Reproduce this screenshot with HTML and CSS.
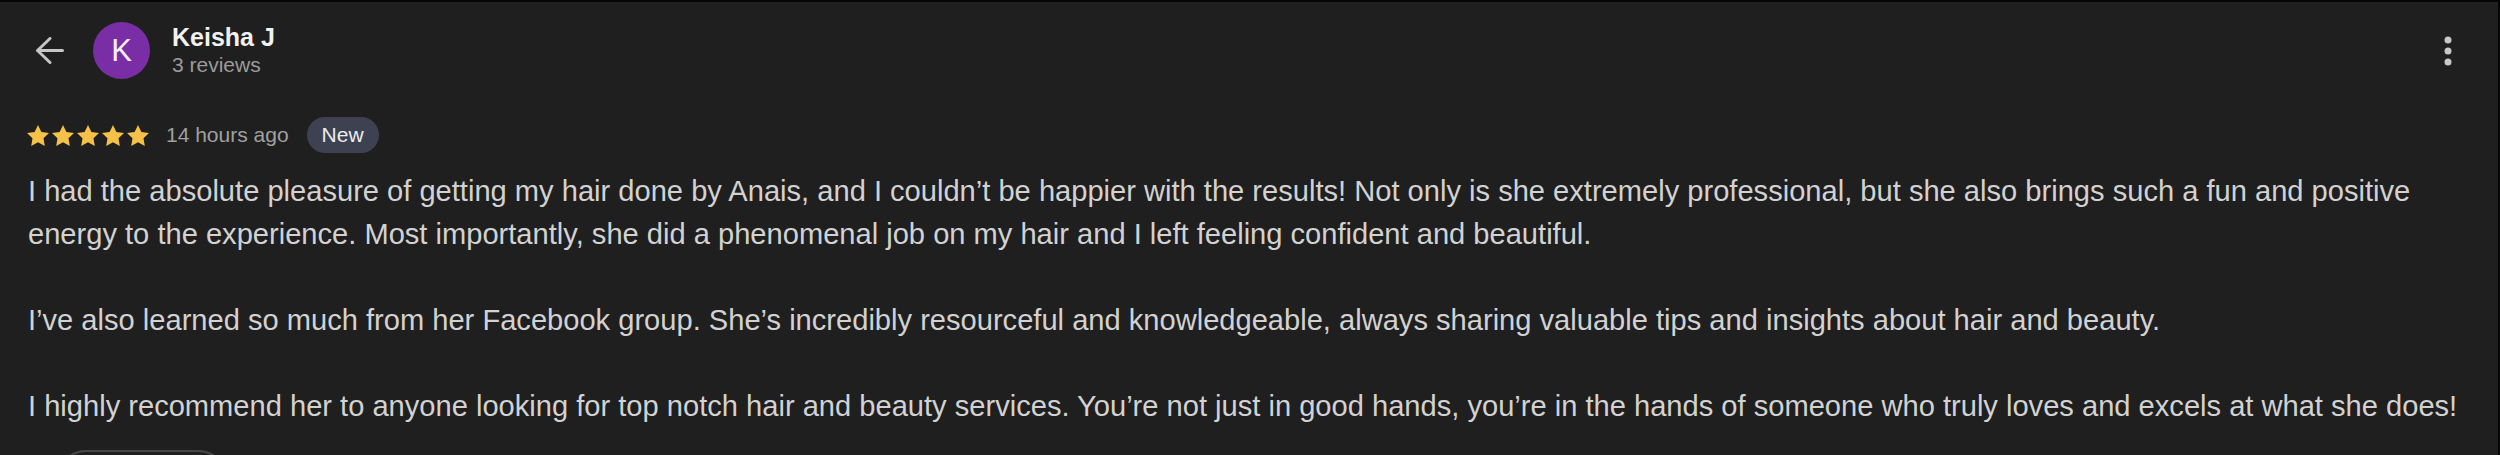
FILE: index.html
```html
<!DOCTYPE html>
<html lang="en">
<head>
  <meta charset="UTF-8">
  <meta name="viewport" content="width=device-width, initial-scale=1.0">
  <title>Review - Keisha J</title>
  <link rel="stylesheet" href="styles.css">
</head>
<body>

  <div class="review">
    <!-- Reviewer header -->
    <div class="review-head">
      <button class="icon-btn back-btn" aria-label="Back">
        <svg width="29" height="27" viewBox="0 0 29 27" fill="none" stroke="#c6c6c6" stroke-width="3" stroke-linecap="round" stroke-linejoin="round">
          <path d="M27.5 13.5H2.5M15 1.5L2.5 13.5L15 25.5"/>
        </svg>
      </button>
      <div class="avatar">K</div>
      <div class="reviewer">
        <div class="reviewer-name">Keisha J</div>
        <div class="reviewer-count">3 reviews</div>
      </div>
      <button class="icon-btn menu-btn" aria-label="More options">
        <svg width="8" height="30" viewBox="0 0 8 30" fill="#c8c8c8">
          <circle cx="4" cy="4" r="3.5"/>
          <circle cx="4" cy="15" r="3.5"/>
          <circle cx="4" cy="26" r="3.5"/>
        </svg>
      </button>
    </div>

    <!-- Rating row -->
    <div class="rating">
      <div class="stars">
        <svg viewBox="2 2 20 19.1"><path d="M12 2l3.09 6.26L22 9.27l-5 4.87 1.18 6.88L12 17.77l-6.18 3.25L7 14.14 2 9.27l6.91-1.010L12 2z"/></svg>
        <svg viewBox="2 2 20 19.1"><path d="M12 2l3.09 6.26L22 9.27l-5 4.87 1.18 6.88L12 17.77l-6.18 3.25L7 14.14 2 9.27l6.91-1.01L12 2z"/></svg>
        <svg viewBox="2 2 20 19.1"><path d="M12 2l3.09 6.26L22 9.27l-5 4.87 1.18 6.88L12 17.77l-6.18 3.25L7 14.14 2 9.27l6.91-1.01L12 2z"/></svg>
        <svg viewBox="2 2 20 19.1"><path d="M12 2l3.09 6.26L22 9.27l-5 4.87 1.18 6.88L12 17.77l-6.18 3.25L7 14.14 2 9.27l6.91-1.01L12 2z"/></svg>
        <svg viewBox="2 2 20 19.1"><path d="M12 2l3.09 6.26L22 9.27l-5 4.87 1.18 6.88L12 17.77l-6.18 3.25L7 14.14 2 9.27l6.91-1.01L12 2z"/></svg>
      </div>
      <span class="time">14 hours ago</span>
      <span class="badge">New</span>
    </div>

    <!-- Review text -->
    <div class="review-body">
      <p>I had the absolute pleasure of getting my hair done by Anais, and I couldn’t be happier with the results! Not only is she extremely professional, but she also brings such a fun and positive energy to the experience. Most importantly, she did a phenomenal job on my hair and I left feeling confident and beautiful.</p>
      <p>I’ve also learned so much from her Facebook group. She’s incredibly resourceful and knowledgeable, always sharing valuable tips and insights about hair and beauty.</p>
      <p>I highly recommend her to anyone looking for top notch hair and beauty services. You’re not just in good hands, you’re in the hands of someone who truly loves and excels at what she does!</p>
    </div>

    <!-- Actions (cut off at the bottom) -->
    <div class="actions">
      <button class="pill-btn" aria-label="Like"></button>
    </div>
  </div>

</body>
</html>
```

FILE: styles.css
```css
/* Page */
body {
  margin: 0;
  background: #050505;
  height: 455px;
  overflow: hidden;
  font-family: "Liberation Sans", Arial, Helvetica, sans-serif;
}

.review {
  background: #1f1f1f;
  margin: 2px 2px 0 0;
  height: 453px;
  overflow: hidden;
  padding: 0 24px 0 28px;
  box-sizing: border-box;
}

/* Header */
.review-head {
  display: flex;
  align-items: center;
  height: 57px;
  margin-top: 20px;
}

.icon-btn {
  background: none;
  border: none;
  padding: 0;
  cursor: pointer;
  display: flex;
}

.back-btn {
  margin-left: 7px;
  margin-right: 29px;
}

.avatar {
  width: 57px;
  height: 57px;
  border-radius: 50%;
  background: #7a2ea6;
  color: #f4eefa;
  font-size: 31px;
  display: flex;
  align-items: center;
  justify-content: center;
  margin-right: 22px;
}

.reviewer-name {
  color: #f1f1f1;
  font-size: 25px;
  font-weight: 700;
  line-height: 29px;
}

.reviewer-count {
  color: #9b9b9b;
  font-size: 21px;
  line-height: 26px;
}

.menu-btn {
  margin-left: auto;
  margin-right: 22px;
}

/* Rating row */
.rating {
  display: flex;
  align-items: center;
  height: 36px;
  margin-top: 38px;
}

.stars {
  display: flex;
  gap: 3px;
  margin-right: 17px;
  margin-left: -1px;
}

.stars svg {
  width: 22px;
  height: 21px;
  fill: #f5c146;
}

.time {
  color: #a0a0a0;
  font-size: 21px;
}

.badge {
  margin-left: 18px;
  height: 36px;
  padding: 0 15px;
  border-radius: 18px;
  background: #3d4152;
  color: #ececec;
  font-size: 21px;
  display: flex;
  align-items: center;
}

/* Review text */
.review-body {
  margin-top: 17px;
  color: #d2d2d2;
  font-size: 29.1px;
  line-height: 43px;
}

.review-body p {
  margin: 0 0 43px;
}

.review-body p:last-child {
  margin-bottom: 0;
}

/* Actions */
.actions {
  margin-top: 22px;
  padding-left: 28px;
}

.pill-btn {
  width: 172px;
  height: 60px;
  border-radius: 30px;
  border: 2px solid #474747;
  background: none;
}
```
